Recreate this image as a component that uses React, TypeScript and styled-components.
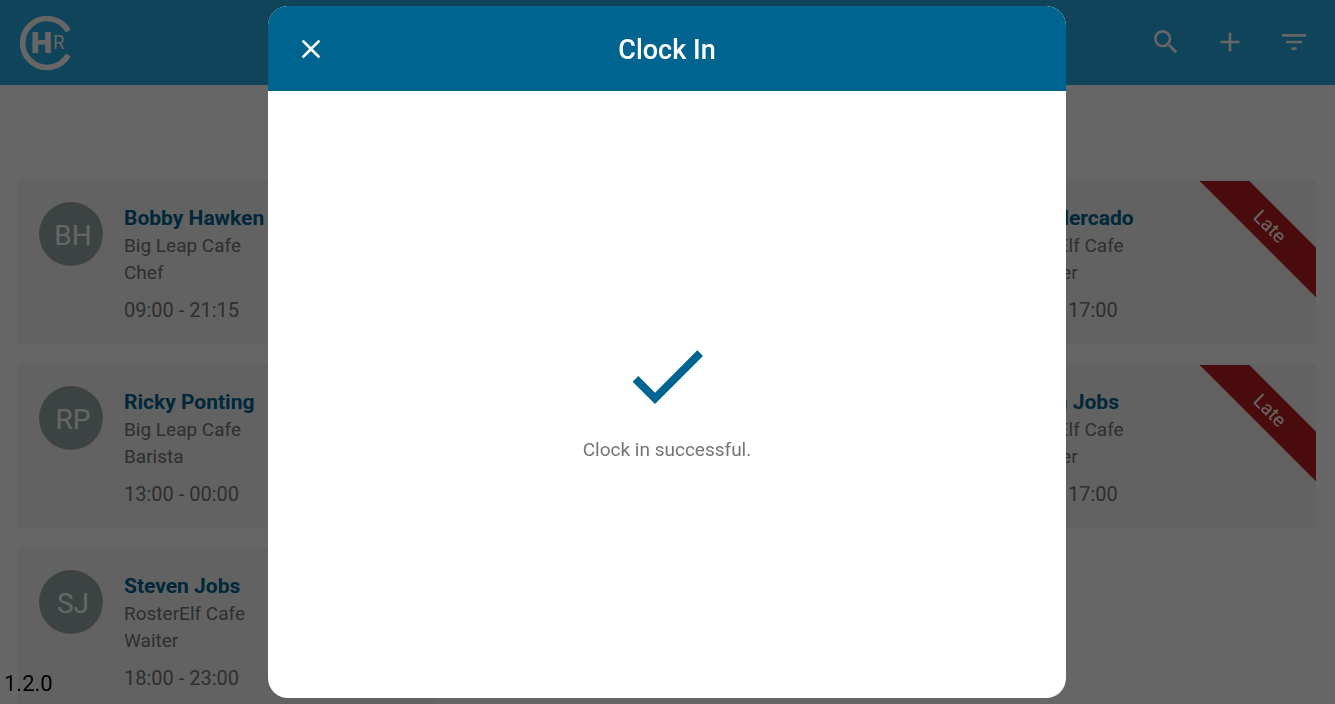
import React from 'react';
import styled, { createGlobalStyle } from 'styled-components';
import { MdAdd, MdCheck, MdClose, MdFilterList, MdSearch } from 'react-icons/md';

const GlobalStyle = createGlobalStyle`
  *, *::before, *::after { box-sizing: border-box; }
  body {
    margin: 0;
    background: #fff;
    font-family: Roboto, "Liberation Sans", sans-serif;
    font-size: 19px;
    line-height: 27px;
    color: #757575;
  }
`;

const Page = styled.div`
  height: 100vh;
  overflow: hidden;
`;

const TopBar = styled.header`
  display: flex;
  align-items: center;
  justify-content: space-between;
  height: 85px;
  padding: 0 25px 0 20px;
  background: #26aae1;
`;

const Logo = styled.svg`
  display: block;
  width: 56px;
  height: 56px;
`;

const Actions = styled.nav`
  display: flex;
  gap: 32px;
  padding-bottom: 2px;
`;

const IconButton = styled.button`
  display: flex;
  padding: 0;
  border: 0;
  background: none;
  color: #fff;
  font-size: 32px;
  cursor: pointer;
`;

const ShiftGrid = styled.main`
  display: grid;
  grid-template-columns: repeat(3, 1fr);
  grid-auto-rows: minmax(164px, auto);
  gap: 20px;
  padding: 95px 19px 20px 18px;
`;

const Card = styled.article`
  position: relative;
  display: flex;
  align-items: flex-start;
  gap: 21px;
  padding: 22px 21px 20px;
  background: #f5f5f5;
`;

const Avatar = styled.div`
  display: flex;
  flex: none;
  align-items: center;
  justify-content: center;
  width: 64px;
  height: 64px;
  padding: 2px 0 0 4px;
  border-radius: 50%;
  background: #95aaa6;
  color: #fff;
  font-size: 28px;
`;

const Details = styled.div`
  padding-top: 2px;
`;

const Name = styled.h2`
  margin: 0;
  color: #006491;
  font-size: 21px;
  line-height: 28px;
  font-weight: 700;
`;

const Line = styled.p`
  margin: 0;
`;

const Time = styled.p`
  margin: 11px 0 0;
  font-size: 20px;
`;

const RibbonCorner = styled.div`
  position: absolute;
  top: 1px;
  right: 0;
  width: 116px;
  height: 116px;
  overflow: hidden;
`;

const Ribbon = styled.span`
  position: absolute;
  top: 28px;
  left: -20px;
  width: 180px;
  background: #b71c1c;
  color: #fff;
  font-size: 19px;
  line-height: 35px;
  text-align: center;
  transform: rotate(45deg);
`;

const Version = styled.footer`
  position: fixed;
  left: 4px;
  bottom: 7px;
  color: #000;
  font-size: 22px;
`;

const Backdrop = styled.div`
  position: fixed;
  inset: 0;
  display: flex;
  justify-content: center;
  padding: 6px 7px 6px 6px;
  background: rgba(0, 0, 0, 0.6);
`;

const Dialog = styled.section`
  display: flex;
  flex-direction: column;
  width: 100%;
  max-width: 798px;
  border-radius: 20px;
  overflow: hidden;
  background: #fff;
`;

const DialogHeader = styled.header`
  display: grid;
  grid-template-columns: 32px 1fr 32px;
  align-items: center;
  height: 85px;
  padding: 0 27px;
  background: #006491;
  color: #fff;
`;

const DialogTitle = styled.h1`
  margin: 0;
  padding-top: 2px;
  font-size: 27px;
  line-height: 32px;
  font-weight: 500;
  text-align: center;
`;

const DialogBody = styled.div`
  display: flex;
  flex: 1;
  flex-direction: column;
  align-items: center;
  justify-content: center;
  gap: 12px;
  padding-top: 2px;
`;

const SuccessIcon = styled(MdCheck)`
  width: 96px;
  height: 96px;
  color: #006491;
`;

type Shift = {
  initials: string;
  name: string;
  site: string;
  role: string;
  time: string;
  late?: boolean;
};

const shifts: (Shift | null)[] = [
  { initials: 'BH', name: 'Bobby Hawken', site: 'Big Leap Cafe', role: 'Chef', time: '09:00 - 21:15' },
  null,
  { initials: 'SM', name: 'Sara Mercado', site: 'RosterElf Cafe', role: 'Manager', time: '09:00 - 17:00', late: true },
  { initials: 'RP', name: 'Ricky Ponting', site: 'Big Leap Cafe', role: 'Barista', time: '13:00 - 00:00' },
  null,
  { initials: 'SJ', name: 'Steven Jobs', site: 'RosterElf Cafe', role: 'Manager', time: '09:00 - 17:00', late: true },
  { initials: 'SJ', name: 'Steven Jobs', site: 'RosterElf Cafe', role: 'Waiter', time: '18:00 - 23:00' },
];

function ShiftCard({ shift }: { shift: Shift }) {
  return (
    <Card>
      <Avatar>{shift.initials}</Avatar>
      <Details>
        <Name>{shift.name}</Name>
        <Line>{shift.site}</Line>
        <Line>{shift.role}</Line>
        <Time>{shift.time}</Time>
      </Details>
      {shift.late && (
        <RibbonCorner>
          <Ribbon>Late</Ribbon>
        </RibbonCorner>
      )}
    </Card>
  );
}

export default function App() {
  return (
    <>
      <GlobalStyle />
      <Page>
        <TopBar>
          <Logo viewBox="0 0 56 56" role="img" aria-label="HR">
            <path d="M48.3 16A24.4 24.4 0 1 0 48.3 40" fill="none" stroke="#fff" strokeWidth="5.6" />
            <text x="11" y="38" fontFamily="Inter" fontSize="28" fontWeight="900" fill="#fff">H</text>
            <text x="33" y="34" fontFamily="Inter" fontSize="18" fontWeight="400" fill="#fff">R</text>
          </Logo>
          <Actions>
            <IconButton type="button" aria-label="Search"><MdSearch /></IconButton>
            <IconButton type="button" aria-label="Add"><MdAdd /></IconButton>
            <IconButton type="button" aria-label="Filter"><MdFilterList /></IconButton>
          </Actions>
        </TopBar>
        <ShiftGrid>
          {shifts.map((shift, i) => (shift ? <ShiftCard key={i} shift={shift} /> : <Card key={i} />))}
        </ShiftGrid>
        <Version>1.2.0</Version>
      </Page>
      <Backdrop>
        <Dialog role="dialog" aria-modal="true" aria-labelledby="dialog-title">
          <DialogHeader>
            <IconButton type="button" aria-label="Close"><MdClose /></IconButton>
            <DialogTitle id="dialog-title">Clock In</DialogTitle>
          </DialogHeader>
          <DialogBody>
            <SuccessIcon aria-hidden="true" />
            <Line>Clock in successful.</Line>
          </DialogBody>
        </Dialog>
      </Backdrop>
    </>
  );
}
